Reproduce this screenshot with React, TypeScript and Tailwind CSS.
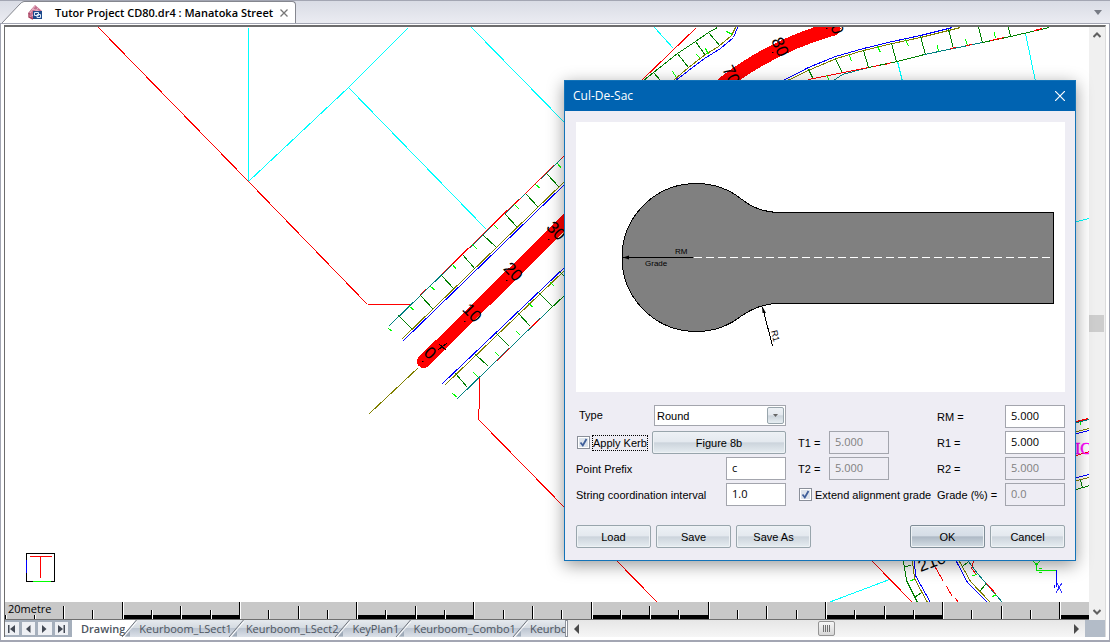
import React, { useState } from "react";

const UI = "font-['Liberation_Sans',Arial,sans-serif]";
const WIDE = "font-['Open_Sans','Noto_Sans',sans-serif]";

function DocumentTabs() {
  return (
    <header className="flex h-6 shrink-0 items-end border-t border-b border-[#a3a6b3] bg-gradient-to-b from-[#d9dce5] to-[#ebecf2]">
      <svg className="h-[22px] w-6 shrink-0" viewBox="0 0 24 22" aria-hidden="true">
        <path d="M2 22 L19 4 Q22 1 24 .5 V22 Z" fill="#fff" />
        <path d="M2 22 L19 4 Q22 .5 24 .5" fill="none" stroke="#85878f" />
      </svg>
      <div className="flex h-[22px] items-center rounded-tr border-t border-r border-[#85878f] bg-white pr-1.5 pl-1">
        <svg className="mr-3 h-4 w-[15px]" viewBox="0 0 15 16" aria-hidden="true">
          <path d="M7 0 L14 6 L8 14 L4 14 L0 8 Z" fill="#c4708f" />
          <path d="M7 1 L2 8 M10 3 L4 11 M4 4 L11 6" stroke="#e8b5c6" strokeWidth="1" />
          <path d="M1 8 V12 L5 14" stroke="#a83f5e" fill="none" strokeWidth="1.4" />
          <rect x="5" y="6" width="9" height="8" fill="#1d4a8c" />
          <path d="M6.500 7.500 H10.500 V10.500 H6.500 Z M9 9.500 H12.500 V12.500 H9 Z" fill="none" stroke="#dfe9f7" />
        </svg>
        <h1 className={`${WIDE} whitespace-nowrap text-[11px] font-semibold leading-4 text-black`}>
          Tutor Project CD80.dr4 : Manatoka Street
        </h1>
        <button type="button" aria-label="Close document" className="ml-1.5 p-px">
          <svg className="size-2" viewBox="0 0 8 8">
            <path d="M.5 .5 L7.500 7.500 M7.500 .5 L.5 7.500" stroke="#777" strokeWidth="1.3" />
          </svg>
        </button>
      </div>
      <button type="button" aria-label="Open documents" className="mr-2 mb-2 ml-auto">
        <svg className="h-[5px] w-2" viewBox="0 0 8 5">
          <path d="M0 0 H8 L4 5 Z" fill="#777b85" />
        </svg>
      </button>
    </header>
  );
}

const strokes: { color: string; d: string }[] = [
  {
    color: "#00ffff",
    d: "M248 27V181M248 181L348 87M348 87L407 28M348 87L486 229M471 27L564 122M654 27L673 48M897 61L902 81M1025 33L1035 81M1076 221L1089 218M889 579L828 602",
  },
  {
    color: "#ff0000",
    d: "M98 27L248 181L367 304M367 304H410M479 377V398M479 398L478 419L657 602M696 27L641 80M872 561L912 602M1076 455L1089 451",
  },
  {
    color: "#008080",
    d: "M388 326L564 155M457 398L548 310M833 80L842 74L868 67M924 54L982 42M968 561L977 573L1002 602M1076 422L1089 419",
  },
  {
    color: "#808000",
    d: "M401 339L564 181M445 384L564 270M418 367L369 413M735 27L731 35L718 46L705 54L688 67L673 80M787 80L810 69L836 58L863 50L892 43L920 37L948 30L960 27M912 561L914 578L927 602M959 561L970 581L990 602M1076 431L1089 428M1076 480L1089 477",
  },
  {
    color: "#0000ff",
    d: "M402 341L564 184M442 383L564 267M737 27L733 37L720 48L704 58L675 80M783 80L808 67L835 56L863 48L892 41L920 35L952 27M914 561L915 575L930 602M956 561L967 582L987 602M1076 433L1089 430M1076 477L1089 474",
  },
  {
    color: "#008000",
    d: "M398 315L412 329M420 295L433 309M441 275L454 289M462 254L475 269M482 234L496 247M504 213L517 227M525 193L538 207M546 173L559 187M455 373L467 387M475 354L488 366M496 333L509 346M517 312L530 326M538 292L552 306M559 271L564 276M548 310L564 295M717 27L708 32L695 41L677 53L653 72L643 80M708 32L720 46M695 41L705 55M677 53L688 67M653 72L660 80M868 67L897 61L924 54M982 42L1010 36L1049 27M808 69L813 79M835 58L842 73M863 50L868 67M891 43L896 61M920 36L925 54M948 29L953 48M978 27L982 42M1008 27L1010 36M903 561L906 580L917 602M905 566L911 565M914 597L921 592M962 566L968 561M979 591L985 584M1076 489L1089 485M1080 480L1082 487",
  },
  {
    color: "#ff0000",
    d: "M419 295L425 289M441 274L517 200M497 219L521 197M524 194L553 165M560 159L564 155M496 361L509 348M529 328L540 318M808 79L868 67M873 66L879 65M885 64L891 62M950 48L956 47M966 45L972 44M990 40L1004 37M1034 30L1042 28M973 561L971 568L976 574M986 583L996 594M935 567L943 581M946 586L952 596M955 598L958 602M1076 421L1088 418",
  },
  {
    color: "#00ff00",
    d: "M388 328L392 331M409 306L414 310M430 286L435 290M452 264L456 269M472 244L477 249M494 225L498 229M514 204L519 209M535 184L540 188M557 163L561 168M452 393L457 397M473 372L478 377M495 352L499 356M516 331L520 335M528 303L533 307M550 282L554 286M726 31L732 34M705 48L708 54M696 54L700 58M672 71L676 77M826 75L829 80M849 55L851 61M877 46L880 52M905 39L908 46M937 45L938 51M965 39L967 45M994 32L995 38M910 580L914 579M972 575L977 574M992 596L996 594M1080 421V424",
  },
];

const segments = strokes.flatMap((s) =>
  s.d
    .split("M")
    .filter(Boolean)
    .map((part) => ({ color: s.color, d: `M${part}` })),
);

const chainages = [
  { text: "0", x: 430, y: 353, turn: 42 },
  { text: "10", x: 472, y: 313, turn: 46 },
  { text: "20", x: 513, y: 272, turn: 46 },
  { text: "30", x: 556, y: 231, turn: 46 },
  { text: "70", x: 731, y: 75, turn: 63 },
  { text: "80", x: 780, y: 47, turn: 66 },
  { text: "0", x: 837, y: 29, turn: 72 },
];

function SiteDrawing() {
  return (
    <svg
      className="min-h-0 w-full flex-1 bg-white font-['Liberation_Sans',sans-serif]"
      viewBox="5 27 1084 575"
      preserveAspectRatio="xMinYMin slice"
      role="img"
      aria-label="Site plan of Manatoka Street"
    >
      <g fill="none" shapeRendering="crispEdges" transform="translate(0.5 0.5)">
        {segments.map((s, i) => (
          <path key={i} d={s.d} stroke={s.color} />
        ))}
        <path d="M423 361L572 214" stroke="#f00" strokeWidth="13" strokeLinecap="round" />
        <path d="M722 84Q770 46 833 28" stroke="#f00" strokeWidth="14" strokeLinecap="round" />
      </g>
      {chainages.map((c) => (
        <text
          key={c.x}
          x={c.x}
          y={c.y}
          fontSize="17"
          textAnchor="middle"
          dominantBaseline="central"
          transform={`rotate(${c.turn} ${c.x} ${c.y})`}
        >
          {c.text}
        </text>
      ))}
      <text x="932" y="562" fontSize="17" textAnchor="middle" dominantBaseline="central" transform="rotate(-20 932 562)">
        210
      </text>
      <path d="M439 344L446 350M438 350L447 343" stroke="#000" shapeRendering="crispEdges" />
      <path d="M422 361h1.500v1h-1.500zM464 321h1.500v1h-1.500zM506 280h1.500v1h-1.500zM548 239h1.500v1h-1.500zM772 52h1.500v1h-1.500zM826 28h1.500v1h-1.500z" />
      <text x="1075" y="454" fontSize="16" fill="#f0f" stroke="#f0f" strokeWidth="0.5" className="font-['Liberation_Serif',serif]">
        IC
      </text>
      <g fill="none" shapeRendering="crispEdges">
        <rect x="26.500" y="553.500" width="28" height="28" stroke="#000" />
        <path d="M30 556.500H52M40.500 557V578" stroke="#f00" />
        <path d="M26.500 560V573" stroke="#00f" />
        <path d="M33 581.500H51" stroke="#0f0" />
        <path d="M1036.500 563V570.500H1056M1033 561L1036.500 565L1040 561M1038 570.500H1043M1039 568.500H1042M1039 572.500H1042" stroke="#0f0" />
        <path d="M1056.500 570V587M1054.500 585V588M1058.500 585V588" stroke="#00f" />
        <path d="M1057 583L1062 593M1062 583L1056 593" stroke="#33f" />
      </g>
    </svg>
  );
}

function ScaleBar() {
  const ticks = Array.from({ length: 37 }, (_, i) => ({
    i,
    x: Math.floor(i * 29.3),
    top: i === 0 ? 13 : i === 1 ? 13 : i % 4 === 0 ? 0 : i % 4 === 2 ? 4 : 8,
  }));
  return (
    <div className="relative h-[18px] shrink-0 overflow-hidden border-b border-[#6f6f6f] bg-[#c8c8c8]">
      <svg className="h-[17px] w-[1084px]" viewBox="0 0 1084 17" shapeRendering="crispEdges" aria-hidden="true">
        {[4, 12, 20, 28, 36].map((n) => (
          <rect key={n} x={Math.floor(n * 29.3)} y="13" width="118" height="4" />
        ))}
        {ticks.map((t) => (
          <g key={t.i}>
            <rect x={t.x} y={t.top} width="1" height={17 - t.top} />
            <rect x={t.x + 1} y={t.top} width="1" height={17 - t.top} fill="#fff" />
          </g>
        ))}
      </svg>
      <span className={`${WIDE} absolute top-px left-[3px] text-[11px] leading-3 text-black`}>20metre</span>
    </div>
  );
}

function VerticalScrollbar() {
  return (
    <div className="flex w-4 shrink-0 flex-col items-center justify-between bg-[#f0f0f0] py-1">
      <button type="button" aria-label="Scroll up">
        <svg className="h-2 w-2" viewBox="0 0 8 8">
          <path d="M.5 6L4 2.500L7.500 6" fill="none" stroke="#606060" strokeWidth="2" />
        </svg>
      </button>
      <div className="h-[17px] w-[15px] self-start bg-[#cdcdcd]" />
      <button type="button" aria-label="Scroll down">
        <svg className="h-2 w-2" viewBox="0 0 8 8">
          <path d="M.5 2L4 5.500L7.500 2" fill="none" stroke="#606060" strokeWidth="2" />
        </svg>
      </button>
    </div>
  );
}

const navIcons = [
  { label: "First sheet", d: "M1 0H2.500V8H1ZM8 0V8L3 4Z" },
  { label: "Previous sheet", d: "M6.500 0V8L2 4Z" },
  { label: "Next sheet", d: "M2 0V8L6.500 4Z" },
  { label: "Last sheet", d: "M1 0V8L6 4ZM6.500 0H8V8H6.500Z" },
];

const sheets = ["Keurboom_LSect1", "Keurboom_LSect2", "KeyPlan1", "Keurboom_Combo1", "Keurboom_Combo2"];

function Slant({ left }: { left: string }) {
  return (
    <svg className="-ml-1 h-[17px] w-4 shrink-0" viewBox="0 0 16 17" aria-hidden="true">
      <path d="M4 0H15L4 13Z" fill={left} />
      <path d="M4 16.500H9V11Z" fill="#9fabb9" />
      <path d="M1 17L15.500 0" stroke="#70757d" />
      <path d="M2.500 17L16 1.500" stroke="#fff" />
    </svg>
  );
}

function SheetBar() {
  return (
    <footer className="flex h-[17px] shrink-0 overflow-hidden bg-[#eee]">
      <div className={`${WIDE} flex w-[560px] shrink-0 overflow-hidden bg-[linear-gradient(#e6eaee,#d5dbe2_45%,#bcc5d1_50%,#dce1e8)] text-[11px] leading-[17px] text-[#4d5560]`}>
        <div className="flex w-[67px] shrink-0 gap-[3px] bg-[#a5afbc] py-0.5 pr-1">
          {navIcons.map((n) => (
            <button key={n.label} type="button" aria-label={n.label} className="flex h-[13px] flex-1 items-center justify-center bg-[#eef0f4]">
              <svg className="h-2 w-[9px]" viewBox="0 0 9 8">
                <path d={n.d} fill="#444a55" />
              </svg>
            </button>
          ))}
        </div>
        <button type="button" className="shrink-0 bg-white pl-[9px] text-left font-semibold">
          Drawing
        </button>
        <Slant left="#fff" />
        {sheets.map((s, i) => (
          <React.Fragment key={s}>
            <button type="button" className="shrink-0 pl-0.5">
              {s}
            </button>
            {i < sheets.length - 1 && <Slant left="none" />}
          </React.Fragment>
        ))}
      </div>
      <div className="w-[3px] shrink-0 border border-[#8d929b] bg-white" />
      <div className="flex min-w-0 flex-1 items-center justify-between bg-gradient-to-b from-[#e6e6e6] to-[#f6f6f6] px-1.5">
        <button type="button" aria-label="Scroll left">
          <svg className="h-2.5 w-[5px]" viewBox="0 0 5 10">
            <path d="M5 0V10L0 5Z" fill="#4b4b4b" />
          </svg>
        </button>
        <div className="flex h-[15px] w-[17px] items-center justify-center gap-px rounded-xs border border-[#949494] bg-gradient-to-b from-[#f7f7f7] to-[#d6d6d6]">
          {[0, 1, 2, 3].map((n) => (
            <span key={n} className="h-[7px] w-px bg-[#707070]" />
          ))}
        </div>
        <button type="button" aria-label="Scroll right">
          <svg className="h-2.5 w-[5px]" viewBox="0 0 5 10">
            <path d="M0 0V10L5 5Z" fill="#4b4b4b" />
          </svg>
        </button>
      </div>
      <div className="w-5 shrink-0 bg-[#b3bcc8]" />
    </footer>
  );
}

function Preview() {
  return (
    <svg
      className="block w-full bg-white font-['Liberation_Sans',sans-serif]"
      viewBox="576 122 489 270"
      role="img"
      aria-label="Cul-de-sac geometry"
    >
      <path
        d="M1053.500 212.500H780Q758 212.500 742 199.500A74 74 0 1 0 742 315.500Q760 303.500 778 303.500H1053.500Z"
        fill="#808080"
        stroke="#000"
        shapeRendering="crispEdges"
      />
      <path d="M694 257.500H1053" stroke="#fff" strokeDasharray="8 4" shapeRendering="crispEdges" />
      <path d="M623 257.500H693M762.500 307L772.500 346" stroke="#000" shapeRendering="crispEdges" />
      <path d="M623 257.500L629 255.500V259.500ZM762 306L762.500 313L766 313Z" />
      <text x="675" y="254" fontSize="8">
        RM
      </text>
      <text x="645" y="266" fontSize="8">
        Grade
      </text>
      <text x="771" y="331" fontSize="9" transform="rotate(76 771 331)">
        R1
      </text>
    </svg>
  );
}

function Field({ id, label, value, disabled, labelWidth }: { id: string; label: string; value: string; disabled?: boolean; labelWidth: string }) {
  return (
    <div className="flex h-[23px] items-center">
      <label htmlFor={id} className={`${labelWidth} shrink-0 whitespace-nowrap`}>
        {label}
      </label>
      <input
        id={id}
        defaultValue={value}
        disabled={disabled}
        className={`${WIDE} h-[23px] w-[60px] border border-[#a3a5ad] bg-white px-[5px] pb-0.5 text-[11px] text-black disabled:bg-[#eeedf4] disabled:text-[#808080]`}
      />
    </div>
  );
}

function Check({ id, label, focused }: { id: string; label: string; focused?: boolean }) {
  const [on, setOn] = useState(true);
  return (
    <div className="flex h-[23px] items-center gap-0.5">
      <span className="relative flex size-[13px] shrink-0">
        <input
          id={id}
          type="checkbox"
          checked={on}
          onChange={(e) => setOn(e.target.checked)}
          className="size-[13px] appearance-none border border-[#8a8f99] bg-[#dde4ec] shadow-[inset_0_0_0_1px_#fff]"
        />
        {on && (
          <svg className="pointer-events-none absolute inset-0 size-[13px]" viewBox="0 0 13 13">
            <path d="M3.500 6.500L5.800 9.500L9.500 3" fill="none" stroke="#3f5f9a" strokeWidth="1.800" />
          </svg>
        )}
      </span>
      <label
        htmlFor={id}
        className={focused ? "whitespace-nowrap border border-dotted border-black" : "whitespace-nowrap pl-px"}
      >
        {label}
      </label>
    </div>
  );
}

function PushButton({ children, className = "w-[75px]", primary }: { children: React.ReactNode; className?: string; primary?: boolean }) {
  const tone = primary
    ? "border-[#7f8d97] bg-[linear-gradient(#dfe6ed,#d5dde6_46%,#aeb9c5_52%,#d5dfe6)] shadow-[inset_0_0_0_1px_#eef2f5]"
    : "border-[#98a5ac] bg-[linear-gradient(#edf1f5,#e4e9ef_46%,#ccd4dc_52%,#e6edf1)] shadow-[inset_0_0_0_1px_#eef2f5]";
  return (
    <button type="button" className={`${className} ${tone} h-[23px] shrink-0 rounded-xs border text-center text-black`}>
      {children}
    </button>
  );
}

function CulDeSacDialog() {
  return (
    <section
      role="dialog"
      aria-labelledby="dialog-title"
      className={`${UI} absolute top-20 left-[564px] w-[512px] border border-[#1373b8] bg-[#eeedf4] text-[11px] leading-[14px] text-black shadow-[0_4px_16px_rgba(0,0,0,0.4)]`}
    >
      <div className="flex h-[30px] items-center justify-between bg-[#0063b1] pr-2.5 pl-2 text-white">
        <h2 id="dialog-title" className={`${WIDE} text-xs`}>
          Cul-De-Sac
        </h2>
        <button type="button" aria-label="Close dialog">
          <svg className="size-2.5" viewBox="0 0 10 10">
            <path d="M0 0L10 10M10 0L0 10" stroke="#fff" strokeWidth="1.200" />
          </svg>
        </button>
      </div>
      <form className="pt-[11px] pr-2.5 pb-3 pl-[11px]" onSubmit={(e) => e.preventDefault()}>
        <Preview />
        <div className="mt-[13px] flex">
          <div className="flex w-[210px] flex-col gap-[3px]">
            <div className="flex h-[23px] items-start justify-between">
              <label htmlFor="type" className="pt-[3px] pl-[3px]">
                Type
              </label>
              <div className="relative w-[132px]">
                <select id="type" className="h-[21px] w-full appearance-none border border-[#a3a5ad] bg-white pl-0.5 text-[11px] text-black">
                  <option>Round</option>
                </select>
                <span className="pointer-events-none absolute top-0.5 right-0.5 flex h-[17px] w-[17px] items-center justify-center rounded-xs border border-[#98a5ac] bg-[linear-gradient(#edf1f5,#e4e9ef_46%,#ccd4dc_52%,#e6edf1)]">
                  <svg className="h-[3px] w-[5px]" viewBox="0 0 5 3">
                    <path d="M0 0H5L2.500 3Z" fill="#666" />
                  </svg>
                </span>
              </div>
            </div>
            <div className="flex items-center justify-between pl-px">
              <Check id="kerb" label="Apply Kerb" focused />
              <PushButton className="w-[134px]">Figure 8b</PushButton>
            </div>
            <Field id="prefix" label="Point Prefix" value="c" labelWidth="w-[150px]" />
            <Field id="interval" label="String coordination interval" value="1.0" labelWidth="w-[150px]" />
          </div>
          <div className="ml-3 flex flex-col gap-[3px] pt-[26px]">
            <Field id="t1" label="T1 =" value="5.000" disabled labelWidth="w-[31px]" />
            <Field id="t2" label="T2 =" value="5.000" disabled labelWidth="w-[31px]" />
            <div className="pl-px">
              <Check id="extend" label="Extend alignment grade" />
            </div>
          </div>
          <div className="ml-auto flex flex-col gap-[3px]">
            <Field id="rm" label="RM =" value="5.000" labelWidth="w-[68px]" />
            <Field id="r1" label="R1 =" value="5.000" labelWidth="w-[68px]" />
            <Field id="r2" label="R2 =" value="5.000" disabled labelWidth="w-[68px]" />
            <Field id="grade" label="Grade (%) =" value="0.0" disabled labelWidth="w-[68px]" />
          </div>
        </div>
        <div className="mt-[19px] flex gap-[5px]">
          <PushButton>Load</PushButton>
          <PushButton>Save</PushButton>
          <PushButton>Save As</PushButton>
          <div className="ml-auto flex gap-[5px]">
            <PushButton primary>OK</PushButton>
            <PushButton>Cancel</PushButton>
          </div>
        </div>
      </form>
    </section>
  );
}

export default function App() {
  return (
    <div className="relative flex h-screen flex-col overflow-hidden bg-white">
      <DocumentTabs />
      <main className="flex min-h-0 flex-1 flex-col border-x border-b-2 border-[#a3a6b3] bg-white px-[3px] pt-px pb-[3px]">
        <div className="flex min-h-0 flex-1 flex-col border-t-2 border-r border-l border-t-[#6d6d6d] border-r-[#dcdcdc] border-l-[#6d6d6d]">
          <div className="flex min-h-0 flex-1">
            <div className="flex min-w-0 flex-1 flex-col">
              <SiteDrawing />
              <ScaleBar />
            </div>
            <VerticalScrollbar />
          </div>
          <SheetBar />
        </div>
      </main>
      <CulDeSacDialog />
    </div>
  );
}
